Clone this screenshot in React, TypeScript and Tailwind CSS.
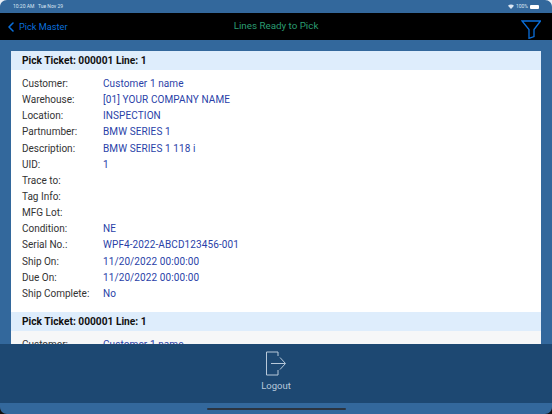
import { ChevronLeft } from 'lucide-react'

const FIELDS: [string, string][] = [
  ['Customer:', 'Customer 1 name'],
  ['Warehouse:', '[01] YOUR COMPANY NAME'],
  ['Location:', 'INSPECTION'],
  ['Partnumber:', 'BMW SERIES 1'],
  ['Description:', 'BMW SERIES 1 118 i'],
  ['UID:', '1'],
  ['Trace to:', ''],
  ['Tag Info:', ''],
  ['MFG Lot:', ''],
  ['Condition:', 'NE'],
  ['Serial No.:', 'WPF4-2022-ABCD123456-001'],
  ['Ship On:', '11/20/2022 00:00:00'],
  ['Due On:', '11/20/2022 00:00:00'],
  ['Ship Complete:', 'No'],
]

function Ticket({ rows, shaded }: { rows: [string, string][]; shaded?: boolean }) {
  return (
    <div className="shrink-0">
      <div className="h-[19px] flex items-center pl-[11px] bg-[#deedfc] text-[10.2px] font-bold text-[#111]">
        Pick Ticket: 000001 Line: 1
      </div>
      <div className={`${shaded ? 'bg-[#f6f7f8]' : 'bg-white'} pt-[5.5px] pb-[10.5px]`}>
        {rows.map(([label, value]) => (
          <div key={label} className="h-[16.15px] flex items-center pl-[11px] text-[10px]">
            <span className="w-[81px] text-[#333]">{label}</span>
            <span className="text-[#2a3fa8] tracking-[0.1px]">{value}</span>
          </div>
        ))}
      </div>
    </div>
  )
}

export default function App() {
  return (
    <div className="w-[552px] h-[414px] overflow-hidden relative flex flex-col bg-[#33689c] font-['Roboto',sans-serif]">
      {/* Status bar */}
      <div className="h-[13px] shrink-0 flex items-center justify-between px-[13px] text-[5px] text-[#dbe6f2]">
        <span>10:20 AM&nbsp;&nbsp; Tue Nov 29</span>
        <div className="flex items-center gap-[2px]">
          <svg width="6" height="5" viewBox="0 0 12 10"><path d="M6 10 0 3.500C3.500 0 8.500 0 12 3.500Z" fill="#dbe6f2" /></svg>
          <span>100%</span>
          <div className="w-[9px] h-[4px] rounded-[1px] bg-white" />
        </div>
      </div>

      {/* Nav bar */}
      <div className="h-[27px] shrink-0 bg-black grid grid-cols-3 items-center">
        <div className="flex items-center pl-[3px] text-[9.2px] text-[#0a6fdc]">
          <ChevronLeft className="w-[16px] h-[20px]" strokeWidth={2.4} />
          <span>Pick Master</span>
        </div>
        <span className="text-center text-[9.8px] text-[#2a9d72]">Lines Ready to Pick</span>
        <div className="flex justify-end pr-[11px] pt-[4px]">
          <svg width="20" height="20" viewBox="0 0 20 20" fill="none">
            <path d="M1 2H19.500L13 10.500V17.500L8 19.300V10.500Z" stroke="#0a6fdc" strokeWidth="1.300" />
          </svg>
        </div>
      </div>

      {/* Scroll content */}
      <div className="flex-1 min-h-0 overflow-hidden pt-[11px] px-[11px]">
        <Ticket rows={FIELDS} />
        <Ticket rows={FIELDS.slice(0, 1)} shaded />
      </div>

      {/* Logout panel */}
      <div className="h-[59px] shrink-0 bg-[#1d4872] flex flex-col items-center text-[#b8c9da]">
        <svg className="mt-[7px]" width="22" height="25" viewBox="0 0 22 25" fill="none" stroke="#b8c9da" strokeWidth="1">
          <path d="M13 5V1H1.500V24H13V19" />
          <path d="M6 12.500H20M15 6.500 20.500 12.500 15 18.500" />
        </svg>
        <span className="text-[9.500px] mt-[3px]">Logout</span>
      </div>

      {/* Home indicator */}
      <div className="h-[11px] shrink-0 flex justify-center pt-[5px]">
        <div className="w-[139px] h-[2px] rounded-full bg-[#2b3440]" />
      </div>

      {/* Screen corners */}
      <svg className="absolute left-0 top-0" width="7" height="7" viewBox="0 0 7 7"><path d="M0 0H7C3 0 0 3 0 7Z" fill="#e8eef5" /></svg>
      <svg className="absolute right-0 top-0" width="7" height="7" viewBox="0 0 7 7"><path d="M7 0H0C4 0 7 3 7 7Z" fill="#e8eef5" /></svg>
      <svg className="absolute left-0 bottom-0" width="7" height="7" viewBox="0 0 7 7"><path d="M0 7H7C3 7 0 4 0 0Z" fill="#111" /></svg>
      <svg className="absolute right-0 bottom-0" width="7" height="7" viewBox="0 0 7 7"><path d="M7 7H0C4 7 7 4 7 0Z" fill="#111" /></svg>
    </div>
  )
}
